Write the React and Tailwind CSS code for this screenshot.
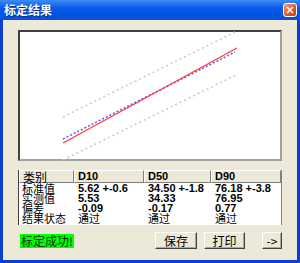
import React from 'react'

const cjk = '"Noto Sans CJK SC", "Noto Sans", sans-serif'
const num = '"Liberation Sans", Arial, sans-serif'

const rows = [
  { label: '标准值', vals: ['5.62 +-0.6', '34.50 +-1.8', '76.18 +-3.8'] },
  { label: '实测值', vals: ['5.53', '34.33', '76.95'] },
  { label: '偏差', vals: ['-0.09', '-0.17', '0.77'] },
  { label: '结果状态', vals: ['通过', '通过', '通过'], cn: true },
]

const widths = ['w-[55px]', 'w-[70px]', 'w-[67px]', 'flex-1']

const Chart = () => (
  <div className="relative w-[264px] h-[131px] bg-white border-2 border-t-[#404040] border-l-[#404040] border-r-[#a0a0a0] border-b-[#a0a0a0]">
    <svg className="absolute -left-[2px] -top-[2px] overflow-visible" width="264" height="131">
      {/* upper / lower limits */}
      <line x1="45" y1="87" x2="219" y2="1" stroke="#c8c8c8" strokeWidth="1.5" strokeDasharray="2 3" />
      <line x1="45" y1="130" x2="220" y2="44" stroke="#c8c8c8" strokeWidth="1.5" strokeDasharray="2 3" />
      {/* measured */}
      <line x1="45" y1="109" x2="217" y2="22" stroke="#5a5af0" strokeWidth="1.5" strokeDasharray="2 2" />
      {/* standard */}
      <line x1="45" y1="113" x2="219" y2="18" stroke="#ff3a3a" strokeWidth="1.3" />
    </svg>
  </div>
)

const Btn = ({ children, w }) => (
  <button
    className={`${w} h-[17px] bg-[#ece9d8] border border-t-white border-l-white border-r-[#404040] border-b-[#404040] shadow-[inset_-1px_-1px_0_#aca899] text-[12px] leading-none text-black flex items-center justify-center`}
    style={{ fontFamily: cjk }}
  >
    {children}
  </button>
)

export default function App() {
  return (
    <div className="w-[300px] h-[263px] flex flex-col bg-[#0a3fd0] select-none">
      {/* title bar */}
      <div className="h-[20px] flex items-center justify-between pl-[4px] pr-[3px] bg-[linear-gradient(#3c8cf8,#0a5ae8_40%,#0054e3_70%,#0a4fd8)]">
        <span className="text-white text-[12px] font-bold leading-none [text-shadow:1px_1px_0_#0a2a80]" style={{ fontFamily: cjk }}>
          标定结果
        </span>
        <div className="w-[14px] h-[14px] rounded-[3px] border border-white bg-[linear-gradient(135deg,#f4a080,#e4582a_55%,#c83a14)] flex items-center justify-center">
          <svg width="8" height="8" viewBox="0 0 8 8">
            <path d="M1 1 L7 7 M7 1 L1 7" stroke="white" strokeWidth="1.7" />
          </svg>
        </div>
      </div>

      {/* body */}
      <div className="flex-1 mx-[3px] mb-[3px] bg-[#ece9d8] flex flex-col pl-[15px] pt-[10px]">
        <Chart />

        {/* table */}
        <div className="mt-[9px] w-[264px] bg-white border-l border-l-[#404040] border-r border-r-[#808080]">
          <div className="flex h-[13px] bg-[#ece9d8]">
            {['类别', 'D10', 'D50', 'D90'].map((h, i) => (
              <div
                key={h}
                className={`${widths[i]} h-full border-t border-l border-t-white border-l-white border-r border-b border-r-[#808080] border-b-[#808080] pl-[3px] flex items-center text-[11px] text-black ${i ? 'font-bold' : ''}`}
                style={{ fontFamily: i ? num : cjk }}
              >
                <span className={i ? 'leading-none' : 'text-[12px] leading-none'}>{h}</span>
              </div>
            ))}
          </div>
          {rows.map((r) => (
            <div key={r.label} className="flex h-[10px] items-center">
              <div className="w-[55px] pl-[3px] text-[11px] leading-[10px] text-black" style={{ fontFamily: cjk }}>
                {r.label}
              </div>
              {r.vals.map((v, i) => (
                <div
                  key={i}
                  className={`${widths[i + 1]} pl-[4px] leading-[10px] text-black ${r.cn ? 'text-[11px]' : 'text-[11px] font-bold'}`}
                  style={{ fontFamily: r.cn ? cjk : num }}
                >
                  {v}
                </div>
              ))}
            </div>
          ))}
          <div className="h-[2px]" />
        </div>

        {/* footer */}
        <div className="mt-[7px] w-[264px] flex items-center">
          <span className="ml-[2px] bg-[#00ff00] px-[1px] text-[12px] leading-[14px] text-[#003000]" style={{ fontFamily: cjk }}>
            标定成功!
          </span>
          <div className="ml-auto flex items-center gap-[7px]">
            <Btn w="w-[42px]">保存</Btn>
            <Btn w="w-[41px]">打印</Btn>
            <div className="w-[3px]" />
            <Btn w="w-[20px]">-&gt;</Btn>
          </div>
        </div>
      </div>
    </div>
  )
}
